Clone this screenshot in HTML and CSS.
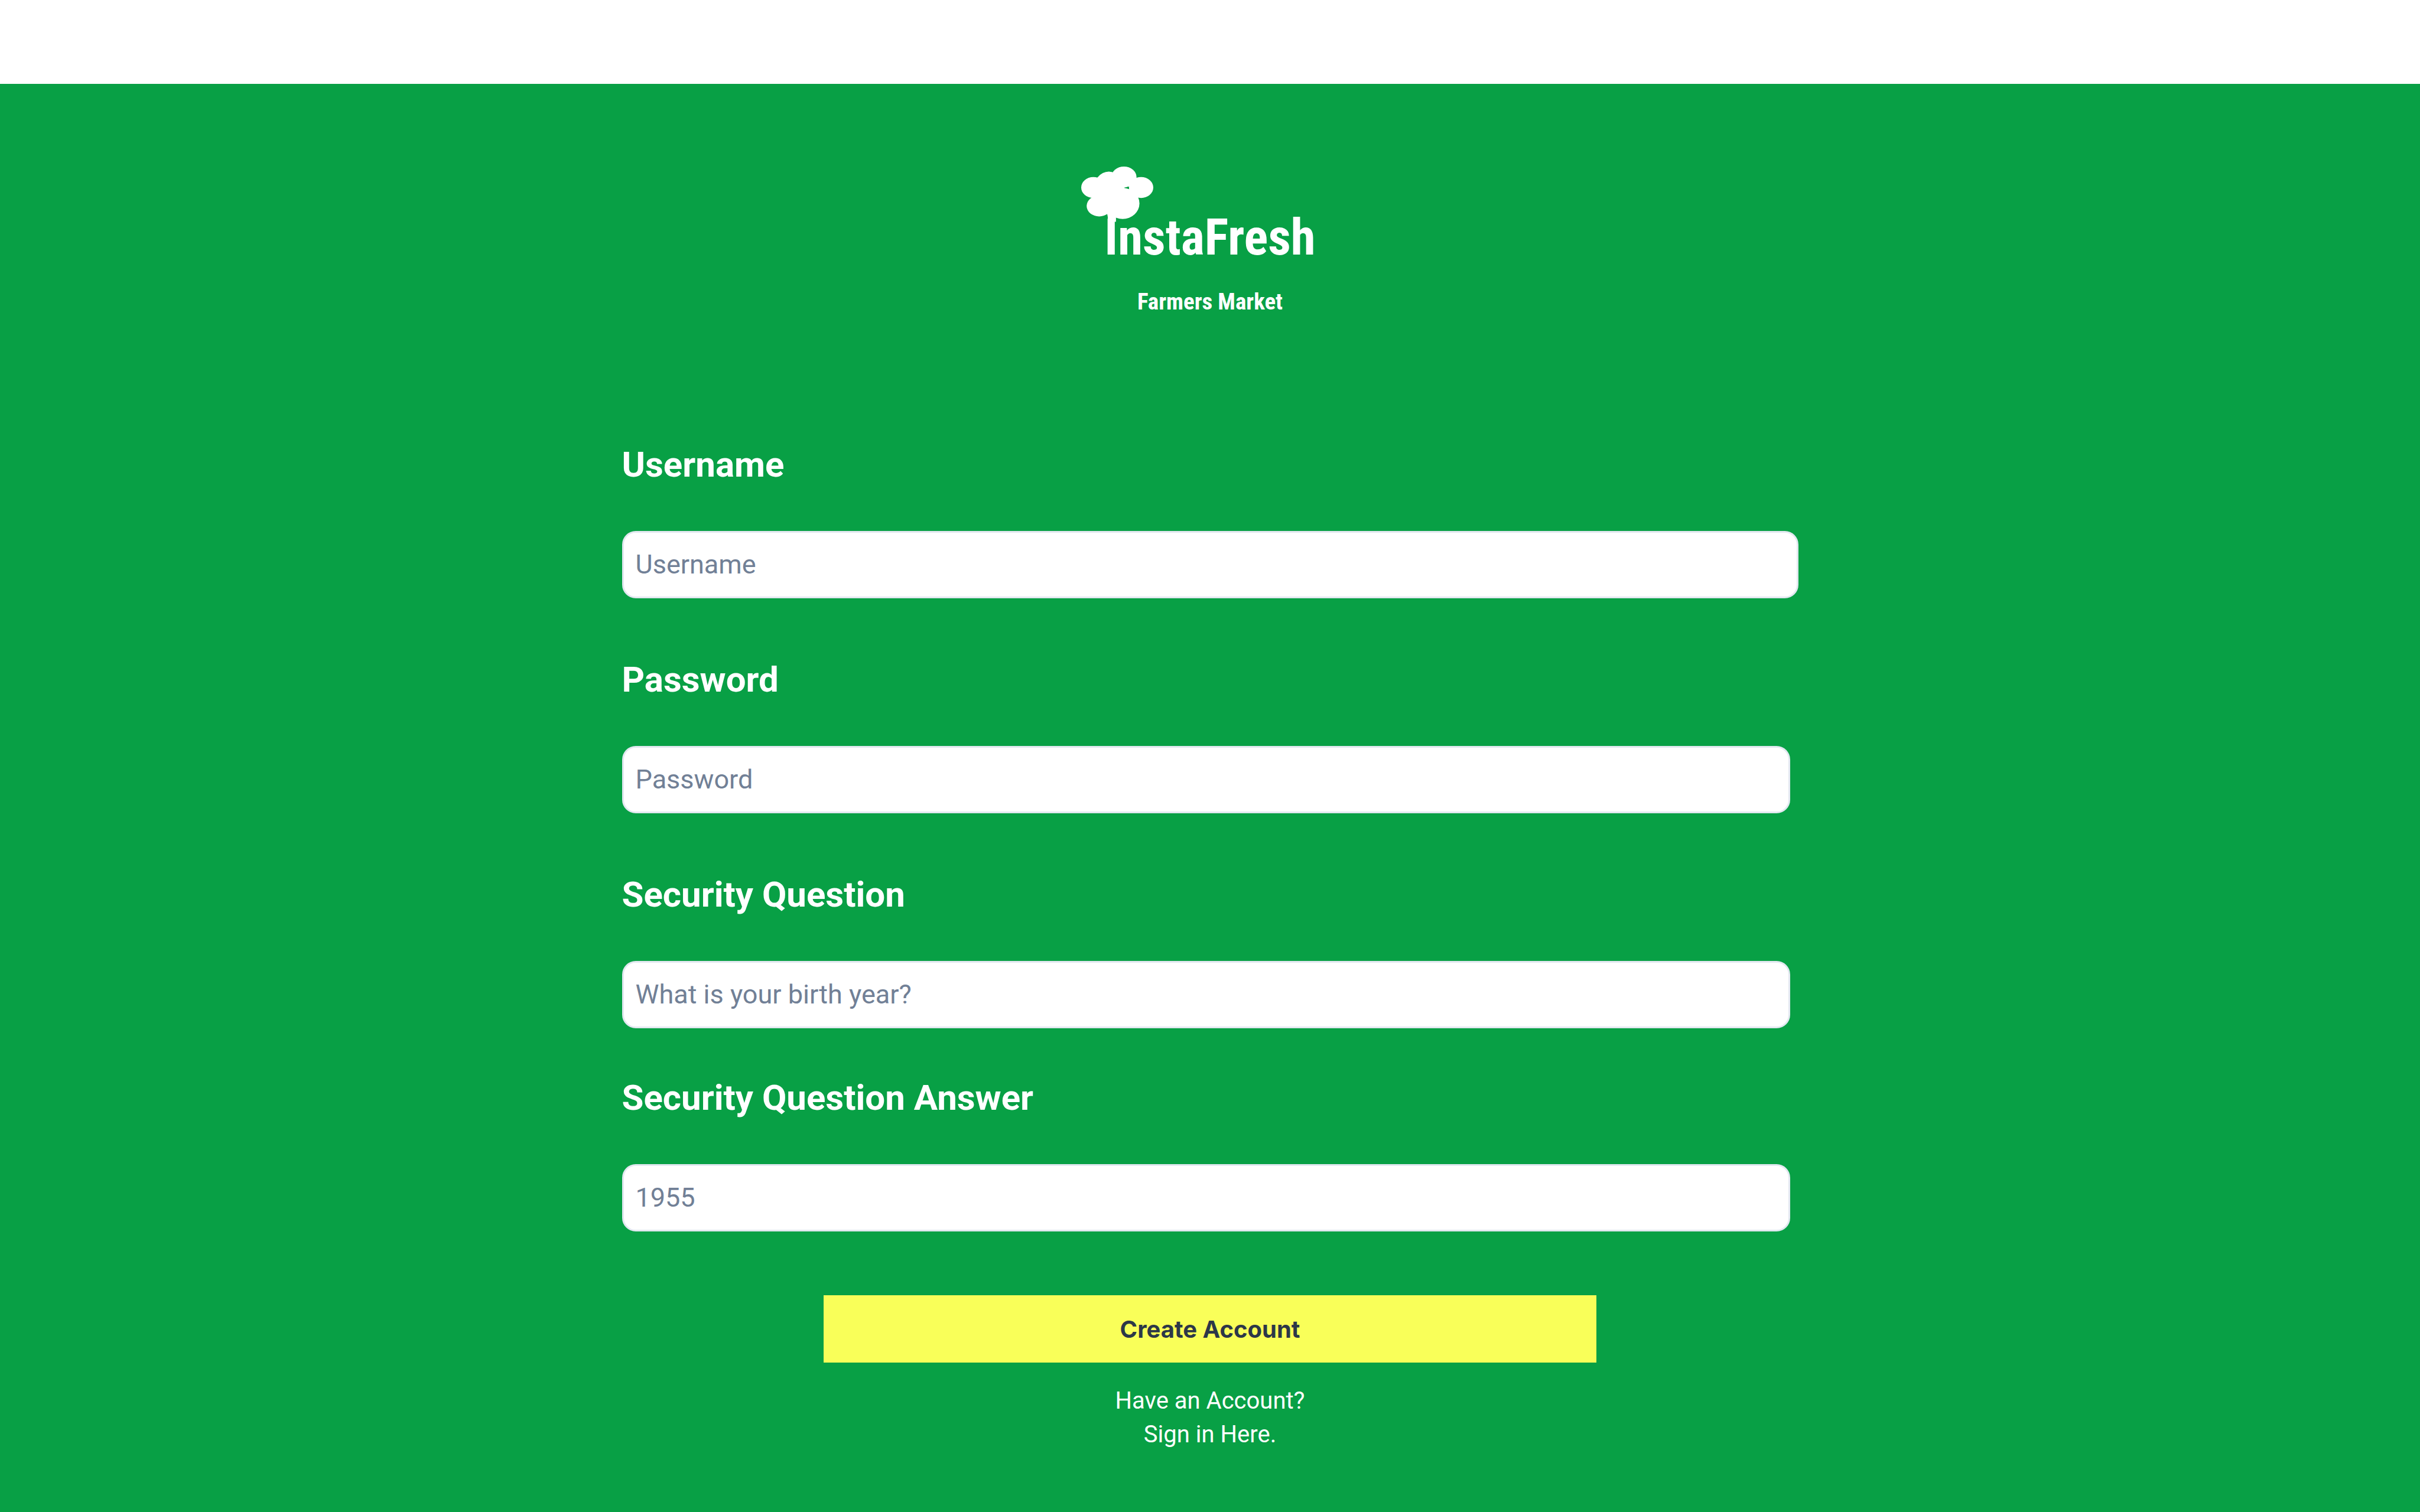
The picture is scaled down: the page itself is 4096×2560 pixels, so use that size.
FILE: index.html
```html
<!DOCTYPE html>
<html lang="en">
<head>
<meta charset="utf-8">
<title>InstaFresh Farmers Market</title>
<link rel="stylesheet" href="styles.css">
</head>
<body>
<main class="page">
  <header class="brand">
    <h1 class="logo">
      <svg class="tree" viewBox="0 0 172 160" aria-hidden="true">
        <ellipse cx="29" cy="50" rx="29" ry="25"/>
        <ellipse cx="66" cy="59" rx="38" ry="47"/>
        <ellipse cx="102" cy="25" rx="30" ry="25"/>
        <ellipse cx="143" cy="50" rx="29" ry="25"/>
        <ellipse cx="43" cy="94" rx="30" ry="25"/>
        <ellipse cx="99" cy="88" rx="40" ry="37"/>
        <path d="M60 108Q64 116 64 132H83V108Z"/>
        <path class="tree-gap" d="M106 50L112 48V52Z"/>
      </svg>
      <span class="wordmark">InstaFresh</span>
    </h1>
    <p class="tagline">Farmers Market</p>
  </header>
  <form class="form">
    <div class="field field-wide">
      <label class="label" for="username">Username</label>
      <input class="input" id="username" type="text" placeholder="Username">
    </div>
    <div class="field">
      <label class="label" for="password">Password</label>
      <input class="input" id="password" type="password" placeholder="Password">
    </div>
    <div class="field">
      <label class="label" for="question">Security Question</label>
      <input class="input" id="question" type="text" placeholder="What is your birth year?">
    </div>
    <div class="field field-close">
      <label class="label" for="answer">Security Question Answer</label>
      <input class="input" id="answer" type="text" placeholder="1955">
    </div>
    <button class="submit" type="submit">Create Account</button>
  </form>
  <p class="signin">Have an Account?<br><a class="link" href="#">Sign in Here.</a></p>
</main>
</body>
</html>
```

FILE: styles.css
```css
* {
  box-sizing: border-box;
}

body {
  margin: 0;
  padding-top: 142px;
  min-height: 100vh;
  display: flex;
  background: #ffffff;
  font-family: Roboto, sans-serif;
}

.page {
  flex: 1;
  display: flex;
  flex-direction: column;
  align-items: center;
  background: #08a045;
  color: #ffffff;
}

.brand {
  padding-top: 212px;
  height: 600px;
  font-family: "Roboto Condensed", Roboto, sans-serif;
  font-weight: 700;
  text-align: center;
}

.logo {
  position: relative;
  margin: 0;
  font-size: 85px;
  line-height: 96px;
}

.tree {
  position: absolute;
  left: -39px;
  top: -72px;
  width: 122px;
  fill: #ffffff;
}

.tree-gap {
  fill: #08a045;
}

.tagline {
  margin: 37px 0 0;
  font-size: 39px;
  line-height: 48px;
}

.form {
  width: 1991px;
  max-width: 100%;
  display: flex;
  flex-direction: column;
}

.field {
  width: 1977px;
  max-width: 100%;
  height: 364px;
  display: flex;
  flex-direction: column;
  gap: 67px;
}

.field-wide {
  width: 100%;
}

.field-close {
  margin-top: -20px;
}

.label {
  font-size: 60px;
  line-height: 90px;
  font-weight: 700;
}

.input {
  width: 100%;
  height: 114px;
  padding: 0 20px 2px;
  border: 3px solid #e2e8f0;
  border-radius: 23px;
  background: #ffffff;
  color: #2d3748;
  font-family: inherit;
  font-size: 45px;
}

.input::placeholder {
  color: #718096;
  opacity: 1;
}

.submit {
  align-self: center;
  width: 1308px;
  max-width: 100%;
  height: 114px;
  margin-top: 15px;
  padding: 0;
  border: 0;
  background: #f9ff59;
  color: #2d3748;
  font-family: Inter, sans-serif;
  font-size: 40px;
  font-weight: 700;
}

.signin {
  margin: 36px 0 0;
  font-size: 40px;
  line-height: 57px;
  text-align: center;
}

.link {
  color: inherit;
  text-decoration: none;
}
```
